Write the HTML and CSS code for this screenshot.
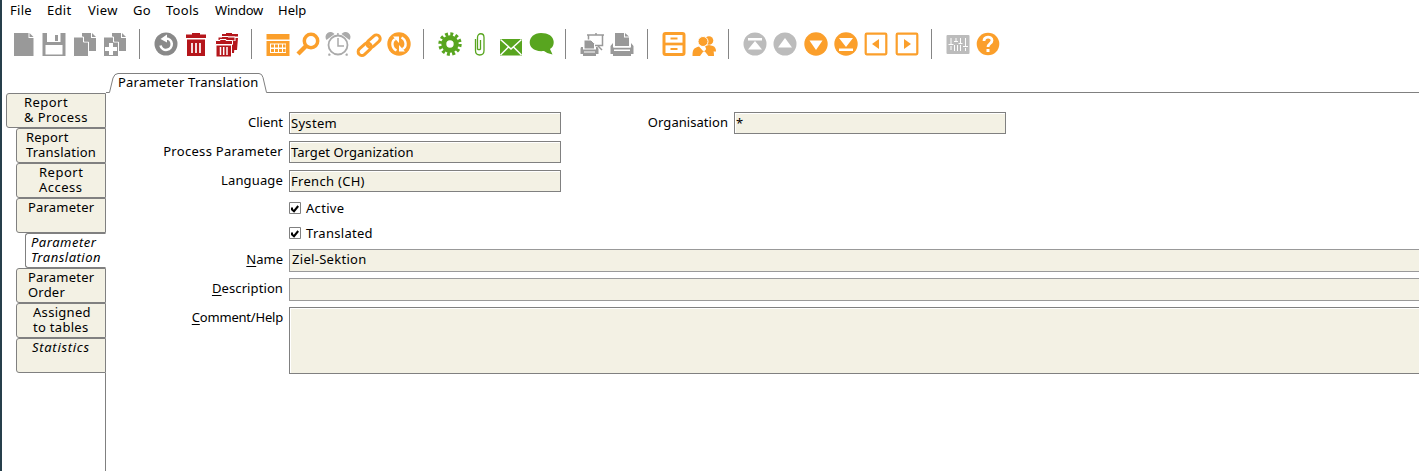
FILE: index.html
```
<!DOCTYPE html>
<html lang="en">
<head>
<meta charset="utf-8">
<title>Parameter Translation</title>
<link rel="stylesheet" href="styles.css">
</head>
<body>
<div class="window">
<nav class="menu"><span class="m-file">File</span><span class="m-edit">Edit</span><span class="m-view">View</span><span class="m-go">Go</span><span class="m-tools">Tools</span><span class="m-window">Window</span><span class="m-help">Help</span></nav>
<div class="toolbar">
  <div class="group gray">
    <svg viewBox="0 0 24 24"><path d="M2 1h14.500v5h5v18H2z"/><path d="M17.500 1l4 4h-4z"/></svg>
    <svg viewBox="0 0 24 24"><path d="M.5 1h23v23H.5z"/><path class="w" d="M5 1h13.500v9H5zM3.500 13h17v9.500h-17z"/><path d="M13 3h3v6h-3z"/></svg>
    <svg viewBox="0 0 24 24"><path d="M9 1h9v5h5v13H9z"/><path d="M19 1l4 4h-4z"/><path stroke="#fff" d="M.5 5h10v5h5v14.500H.5z"/><path d="M11.500 5l4.500 4.500h-4.500z"/></svg>
    <svg viewBox="0 0 24 24"><path d="M9 1h9v5h5v13H9z"/><path d="M19 1l4 4h-4z"/><path stroke="#fff" d="M.5 5h10v5h5v14.500H.5z"/><path d="M11.500 5l4.500 4.500h-4.500z"/><path class="w" d="M6 11h4v4h4v4h-4v4H6v-4H2v-4h4z"/></svg>
  </div><i class="sep"></i>
  <div class="group">
    <svg viewBox="0 0 24 24"><circle fill="#898989" cx="12" cy="12" r="11.500"/><path fill="none" stroke="#fff" stroke-width="2.600" d="M6.500 13.500A5.700 5.700 0 1 0 12 6.500"/><path class="w" d="M13 2.500v8L6.500 7z"/></svg>
    <svg class="red" viewBox="0 0 24 24"><path d="M8 1h8v1.500h6V6H2V2.500h6z"/><path d="M3 7.500h18V24H3z"/><path stroke="#fff" stroke-width="1.700" d="M8 11v10M12 11v10M16 11v10"/></svg>
    <svg class="red" viewBox="0 0 24 24"><path d="M11 1h6v1h6v2.500H7V2h4zM19 6h4l-1 12h-3z"/><path stroke="#fff" d="M7 4.500h6v.5h7v4H3V5h4z"/><path d="M17 9h3l-1 12h-2z"/><path stroke="#fff" d="M5 7.500h6v1h6.500v4H.5v-4H5z"/><path d="M1.500 13.500h14.500V24.500H1.500z"/><path stroke="#fff" stroke-width="1.500" d="M5.500 15v8M8.700 15v8M12 15v8"/></svg>
  </div><i class="sep"></i>
  <div class="group orange">
    <svg viewBox="0 0 24 24"><path d="M.5 2h23v5.500H.5zM.5 9h23v15H.5z"/><path class="w" d="M4 11.500h16v9.500H4z"/><path d="M5 12.500h3v3H5zM9 12.500h3v3H9zM13 12.500h3v3h-3zM17 12.500h2.500v3H17zM5 17h3v3H5zM9 17h3v3H9zM13 17h3v3h-3zM17 17h2.500v3H17z"/></svg>
    <svg viewBox="0 0 24 24"><circle class="line" cx="15" cy="9" r="6.700" stroke-width="3.500"/><path class="line" stroke-width="4.500" d="M10 14L2 22"/></svg>
    <svg class="lightgray" viewBox="0 0 24 24"><circle class="line" cx="12" cy="13" r="9.500" stroke-width="1.800"/><path class="line" stroke-width="1.500" d="M12 6v8h6M11.900 1v3"/><path d="M.5 8a5 5 0 0 1 8-6zM23.500 8a5 5 0 0 0-8-6zM3 21l2 2-2 1-1-1zM21 21l-2 2 2 1 1-1z"/></svg>
    <svg viewBox="0 0 24 24"><g transform="rotate(-42 12 13)"><rect class="line" x="-1.500" y="9.500" width="15" height="7.500" rx="3.700" stroke-width="3"/><rect class="line" x="10.500" y="9.500" width="15" height="7.500" rx="3.700" stroke-width="3"/></g></svg>
    <svg viewBox="0 0 24 24"><circle cx="12" cy="12" r="11.700"/><path fill="none" stroke="#fff" stroke-width="2.400" d="M9.500 18.500C4.500 16 4 9 8.500 7M14.500 5.500C19.500 8 20 15 15.500 17"/><path class="w" d="M6 4.500h6v6.500zM18 19.500h-6V13z"/></svg>
  </div><i class="sep"></i>
  <div class="group green">
    <svg viewBox="0 0 24 24"><circle class="line" cx="12" cy="12" r="9.900" stroke-width="3.600" stroke-dasharray="2.900 2.284"/><circle class="line" cx="12" cy="12" r="6.200" stroke-width="5"/></svg>
    <svg viewBox="0 0 24 24"><path class="line" stroke-width="1.300" d="M12.500 8v9a2 2 0 0 1-3 0V5.500c0-5 6.500-5 6.500 0v13c0 6-8.500 6-8.500 0V7"/></svg>
    <svg viewBox="0 0 24 24"><path d="M1 7h22v16.500H1z"/><path fill="none" stroke="#fff" stroke-width="1.500" d="M1.500 7.500L12 17 22.500 7.500M1.500 23l8-8M22.500 23l-8-8"/></svg>
    <svg viewBox="0 0 24 24"><path d="M12 1c15 0 15 13 9 16l2.500 5.500q-5-.5-8.500-3.500C-4 21-3 1 12 1z"/></svg>
  </div><i class="sep"></i>
  <div class="group gray">
    <svg viewBox="0 0 24 24"><path class="line" stroke-width="1.500" d="M7 3h17M8.500 3v10.500h14V3M18 14l4 4M16 1v2"/><path stroke="#fff" d="M4 8h7l3.500 3.500V17H4z"/><path d="M1 15h2v2.500h13V15h1.500l1 2v5H16v2H3v-2H.5v-5z"/><path class="w" d="M4 19.500h11v1H4z"/></svg>
    <svg viewBox="0 0 24 24"><path d="M5 1h9v4.500h5V14H5z"/><path d="M15 1l4 3.500h-4zM3 11v4.500h18V11l2.500 3v8H21v2H3v-2H.5v-8z"/><path class="w" d="M4 17.500h16V19H4zM4 14.500h16v1H4z"/></svg>
  </div><i class="sep"></i>
  <div class="group orange">
    <svg viewBox="0 0 24 24"><rect class="line" x="2" y="1.500" width="20" height="21" rx="1.500" stroke-width="3"/><path class="line" stroke-width="2.700" d="M2 12h20"/><path class="line" stroke-width="2" d="M8.500 6.500h7M8.500 17h7"/></svg>
    <svg viewBox="0 0 24 24"><circle cx="17" cy="8.500" r="4.300"/><path d="M13 14l4-1 4 1q3 1 3 5.500h-9z"/><circle cx="11" cy="9.500" r="5" stroke="#fff"/><path d="M.5 24c0-7 1.500-8 6.500-9.500l5 5.500 4-5.500c5 1.500 6 3 6 9.500h-5.500L12 18.500 8 24z"/></svg>
  </div><i class="sep"></i>
  <div class="group orange">
    <svg class="pale" viewBox="0 0 24 24"><circle cx="12" cy="12" r="11.500"/><path class="w" d="M5 6h14v2.500H5zM12 9l7 8.500H5z"/></svg>
    <svg class="pale" viewBox="0 0 24 24"><circle cx="12" cy="12" r="11.500"/><path class="w" d="M12 6l7 9.500H5z"/></svg>
    <svg viewBox="0 0 24 24"><circle cx="12" cy="12" r="11.700"/><path class="w" d="M5.500 8.500h13L12 18z"/></svg>
    <svg viewBox="0 0 24 24"><circle cx="12" cy="12" r="11.700"/><path class="w" d="M5 6h14l-7 9zM5 16.500h14V19H5z"/></svg>
    <svg viewBox="0 0 24 24"><rect class="line" x="1.700" y="1.700" width="20.600" height="20.600" rx="1" stroke-width="2.200"/><path d="M15 7v10l-7-5z"/></svg>
    <svg viewBox="0 0 24 24"><rect class="line" x="1.700" y="1.700" width="20.600" height="20.600" rx="1" stroke-width="2.200"/><path d="M9 7v10l7-5z"/></svg>
  </div><i class="sep"></i>
  <div class="group orange">
    <svg class="pale" viewBox="0 0 24 24"><rect x=".5" y="3" width="23" height="19" rx="1"/><path fill="none" stroke="#fff" d="M5 6v6M5 14v4M2.500 12.500h5M10 6v3M8 9.500h4M8.500 13v6M11.500 13v6M14.500 6v5M12.500 11.500h4M14.500 13v6M19.500 6v8M19.500 16v3M17 14.500h5"/></svg>
    <svg viewBox="0 0 24 24"><circle cx="12" cy="12" r="11.300"/><path fill="none" stroke="#fff" stroke-width="2.800" d="M8 9c0-5 8-5 8-.5 0 3-4 3-4 6.500"/><path class="w" d="M10.500 17h3v3h-3z"/></svg>
  </div>
</div>
<div class="workspace">
  <aside class="side">
    <div class="tab root t1">Report<br>&amp; Process</div>
    <div class="tab t2">Report<br>Translation</div>
    <div class="tab t3">Report<br>Access</div>
    <div class="tab t4">Parameter</div>
    <div class="tab active">Parameter<br>Translation</div>
    <div class="tab t4">Parameter<br>Order</div>
    <div class="tab t7">Assigned<br>to tables</div>
    <div class="tab t8">Statistics</div>
    <div class="rest"></div>
  </aside>
  <main class="main">
    <div class="toptab">
      <svg viewBox="0 0 161 20"><path d="M0 19.500h3.500L7 5Q8.500.5 12 .5h141q3 0 4 4l3.500 15h.5"/></svg>
      <span>Parameter Translation</span><div class="rule"></div>
    </div>
    <form class="form">
      <div class="row"><label class="snug">Client</label><div class="field">System</div><label class="org">Organisation</label><div class="field">*</div></div>
      <div class="row"><label>Process Parameter</label><div class="field narrow">Target Organization</div></div>
      <div class="row"><label class="lang">Language</label><div class="field">French (CH)</div></div>
      <div class="check"><svg viewBox="0 0 12 12"><path class="box" d="M.5.5h11v11H.5z"/><path class="tick" d="M3 5.500v2l2 1.700L9.200 4"/></svg>Active</div>
      <div class="check"><svg viewBox="0 0 12 12"><path class="box" d="M.5.5h11v11H.5z"/><path class="tick" d="M3 5.500v2l2 1.700L9.200 4"/></svg>Translated</div>
      <div class="row wide"><label class="snug"><u>N</u>ame</label><div class="field">Ziel-Sektion</div></div>
      <div class="row wide"><label class="desc"><u>D</u>escription</label><div class="field"></div></div>
      <div class="row area"><label class="comment"><u>C</u>omment/Help</label><div class="field"></div></div>
    </form>
  </main>
</div>
</div>
</body>
</html>
```
FILE: styles.css
```
* { box-sizing: border-box; }
body { margin: 0; background: #fff; color: #000; font: 13px/15px "Noto Sans", sans-serif; letter-spacing: .3px; overflow: hidden; }
.window { height: 471px; border-left: 2px solid #263f4b; display: flex; flex-direction: column; }
.menu { height: 22px; display: flex; padding: 3px 0 0 8px; flex: none; }
.m-file { width: 37px; }
.m-edit { width: 41px; }
.m-view { width: 45px; }
.m-go { width: 33px; }
.m-tools { width: 49px; }
.m-window { width: 63px; letter-spacing: -.2px; }
.m-help { letter-spacing: 0; }
.toolbar { height: 51px; padding: 7px 0 0 7px; display: flex; align-items: flex-start; flex: none; }
.group { display: flex; padding-top: 3px; }
.group svg { width: 24px; height: 24px; margin: 0 3.150px; overflow: visible; fill: currentColor; }
.sep { width: 1px; height: 30px; background: #858585; margin: 0 10.900px 0 9px; }
.w { fill: #fff; }
.line { fill: none; stroke: currentColor; }
.gray { color: #999; }
.red { color: #b5161b; }
.orange { color: #fb9f2b; }
.orange .pale { color: #bcbcbc; }
.orange .lightgray { color: #aaa; }
.green { color: #58a51f; }
.workspace { flex: 1; display: flex; }
.side { width: 104px; padding-top: 20px; display: flex; flex-direction: column; flex: none; }
.tab { height: 35px; margin-left: 14px; background: #f3f1e4; border: 1px solid #808080; border-radius: 3px 0 0 3px; padding-top: 1px; flex: none; white-space: nowrap; }
.root { margin-left: 4px; }
.t1 { padding-left: 17px; letter-spacing: .45px; }
.t2 { padding-left: 9px; letter-spacing: .2px; }
.t3 { padding-left: 22px; letter-spacing: .5px; }
.t4 { padding-left: 11px; letter-spacing: .2px; }
.t7 { padding-left: 16px; }
.t8 { padding-left: 15px; font-style: italic; letter-spacing: .7px; }
.active { margin-left: 23px; padding-left: 5px; background: #fff; border-right-color: transparent; font-style: italic; letter-spacing: .5px; }
.rest { flex: 1; border-right: 1px solid #808080; }
.main { flex: 1; min-width: 0; }
.toptab { height: 20px; display: grid; grid-template-columns: 161px 1fr; }
.toptab svg { grid-area: 1 / 1; width: 161px; height: 20px; overflow: visible; }
.toptab path { fill: #fff; stroke: #808080; }
.toptab span { grid-area: 1 / 1; padding: 2px 0 0 12px; z-index: 1; letter-spacing: .23px; }
.rule { grid-area: 1 / 2; border-bottom: 1px solid #808080; }
.form { padding-top: 19px; display: flex; flex-direction: column; }
.row { display: flex; height: 22px; margin-bottom: 7px; }
.row label { width: 177px; margin-right: 6px; padding-top: 3px; text-align: right; flex: none; }
.row .org { width: 167px; letter-spacing: .05px; }
.row .snug { letter-spacing: 0; }
.row .lang { letter-spacing: .15px; }
.row .desc { letter-spacing: .1px; }
.row .comment { letter-spacing: -.2px; }
.field { width: 272px; height: 100%; border: 1px solid #808080; background: #f3f1e4; box-shadow: inset 1px 1px #fff; padding: 3px 0 0 1px; }
.narrow { letter-spacing: .05px; }
.check { display: flex; align-items: center; height: 25px; padding-left: 183px; }
.check svg { width: 12px; height: 12px; margin: -1px 5px 0 0; }
.check:nth-child(4) { margin-top: -3px; }
.box { fill: #fff; stroke: #808080; }
.tick { fill: none; stroke: #000; stroke-width: 2; }
.wide { height: 23px; margin-bottom: 6px; }
.check + .wide { margin-top: 3px; }
.wide .field, .area .field { flex: 1; border-right: 0; }
.wide .field { padding: 2px 0 0 2px; box-shadow: none; border-color: #999; }
.area { height: 67px; }
u { text-underline-offset: 2px; text-decoration-skip-ink: none; }
```
